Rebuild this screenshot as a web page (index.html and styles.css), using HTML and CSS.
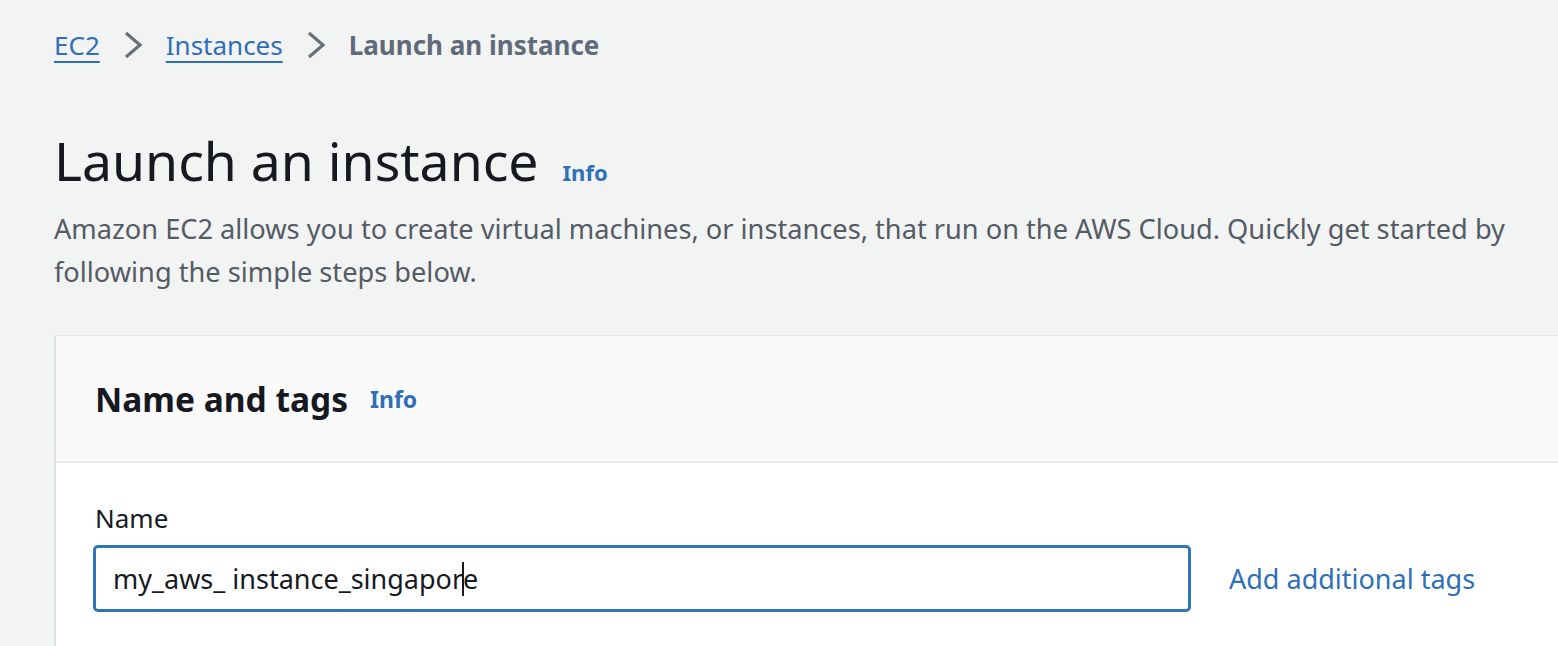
FILE: index.html
```html
<!DOCTYPE html>
<html>
<head>
<meta charset="utf-8">
<link rel="stylesheet" href="styles.css">
</head>
<body>
<div class="page">
  <nav class="crumbs">
    <a class="crumb-link">EC2</a>
    <svg class="chev" width="20" height="30" viewBox="0 0 20 30"><path d="M3 3 L17 15 L3 27" fill="none" stroke="#687078" stroke-width="3.2"/></svg>
    <a class="crumb-link">Instances</a>
    <svg class="chev" width="20" height="30" viewBox="0 0 20 30"><path d="M3 3 L17 15 L3 27" fill="none" stroke="#687078" stroke-width="3.2"/></svg>
    <span class="crumb-current">Launch an instance</span>
  </nav>
  <header class="head">
    <div class="title-row">
      <h1 class="title">Launch an instance</h1>
      <a class="info info-lg">Info</a>
    </div>
    <p class="desc">Amazon EC2 allows you to create virtual machines, or instances, that run on the AWS Cloud. Quickly get started by following the simple steps below.</p>
  </header>
  <section class="card">
    <div class="card-head">
      <h2 class="card-title">Name and tags</h2>
      <a class="info info-md">Info</a>
    </div>
    <div class="card-body">
      <div class="label">Name</div>
      <div class="field-row">
        <div class="input">my_aws_ instance_singapor<span class="caret"></span>e</div>
        <a class="add-link">Add additional tags</a>
      </div>
    </div>
  </section>
</div>
</body>
</html>
```
FILE: styles.css
```css
html, body {
  margin: 0;
  padding: 0;
  background: #f2f3f3;
  font-family: "Noto Sans", "Open Sans", sans-serif;
  overflow: hidden;
}
.page {
  padding: 22px 0 0 54px;
}
.crumbs {
  display: flex;
  align-items: center;
  gap: 23px;
  height: 46px;
  font-size: 26px;
}
.crumb-link {
  color: #2e6fb6;
  text-decoration: underline;
  text-decoration-thickness: 2px;
  text-underline-offset: 6px;
}
.chev { display: block; }
.crumb-current {
  color: #5f6b7a;
  font-weight: 700;
}
.head {
  padding-top: 61px;
}
.title-row {
  display: flex;
  align-items: baseline;
  gap: 24px;
}
.title {
  margin: 0;
  font-size: 53.5px;
  font-weight: 400;
  color: #16191f;
  line-height: 64px;
}
.info {
  color: #2e6fb6;
  font-weight: 700;
}
.info-lg { font-size: 22px; }
.info-md { font-size: 23px; }
.desc {
  margin: 14px 0 0;
  font-size: 27.2px;
  line-height: 43px;
  color: #545b64;
  max-width: 1480px;
}
.card {
  margin-top: 42px;
  background: #fff;
  border-left: 2px solid #dfe2e2;
  border-top: 1px solid #e4e7e7;
}
.card-head {
  background: #fafafa;
  height: 125px;
  border-bottom: 2px solid #eaeded;
  display: flex;
  align-items: center;
  gap: 22px;
  padding-left: 39px;
}
.card-title {
  margin: 0;
  font-size: 33.5px;
  font-weight: 700;
  color: #16191f;
}
.card-body {
  padding: 38px 0 60px 37px;
}
.label {
  font-size: 26px;
  color: #16191f;
  margin-left: 2px;
  line-height: 34px;
}
.field-row {
  display: flex;
  align-items: center;
  gap: 38px;
  margin-top: 10px;
}
.input {
  box-sizing: border-box;
  width: 1098px;
  height: 67px;
  border: 3px solid #2f73b8;
  border-radius: 5px;
  padding-left: 17px;
  display: flex;
  align-items: center;
  font-size: 27px;
  color: #16191f;
  background: #fff;
}
.caret {
  display: inline-block;
  width: 2px;
  height: 34px;
  background: #16191f;
  margin: 0 -1px;
}
.add-link {
  color: #2e6fb6;
  font-size: 27px;
}
```
